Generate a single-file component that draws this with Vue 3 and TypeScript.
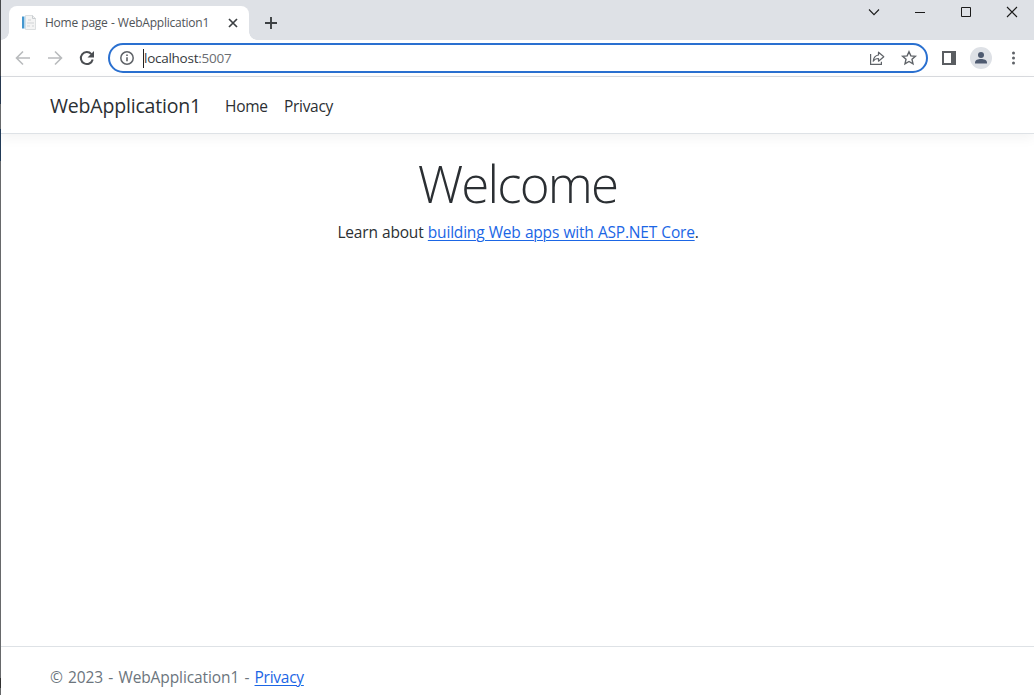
<script setup lang="ts">
const navItems: string[] = ['Home', 'Privacy']
</script>

<template>
  <div class="window">
    <div class="edge"></div>
    <div class="tabs">
      <div class="tab">
        <svg class="fav" width="16" height="16" viewBox="0 0 16 16">
          <path d="M4.500.5h7l3 3v11h-10z" fill="#f4f4f4" stroke="#dcdfe0" />
          <path d="M11.500 .5v3h3" fill="none" stroke="#c9cdd0" />
          <path d="M7 5h3M6 8h7M6 11h3m2 0h2" stroke="#d0d3d5" />
          <path d="M1 1.500h2.500v12H1z" fill="#4497cf" />
          <path d="M3.500 1.500h1.200v12H3.500z" fill="#c5dfed" />
        </svg>
        <span class="title">Home page - WebApplication1</span>
        <svg class="close" width="10" height="10" viewBox="0 0 10 10"><path d="M1 1l8 8M9 1L1 9" stroke="#3c4043" stroke-width="1.700" /></svg>
      </div>
      <svg class="plus" width="14" height="14" viewBox="0 0 14 14"><path d="M7 1v12M1 7h12" stroke="#3c4043" stroke-width="1.900" /></svg>
      <svg class="controls" width="174" height="24" viewBox="0 0 174 24" fill="none" stroke="#1b1b1b">
        <path d="M9 9.500l5 5.200 5-5.200" stroke-width="1.100" />
        <path d="M55 12.500h10" />
        <path d="M101.500 7.500h9v9h-9z" />
        <path d="M147 7l10 10M157 7l-10 10" stroke-width="1.100" />
      </svg>
    </div>

    <div class="toolbar">
      <svg class="nav-icons" width="108" height="36" viewBox="0 0 108 36" fill="none" stroke-width="1.600">
        <path d="M30 18H17M23 11.500L16.500 18l6.500 6.500" stroke="#b9bbbd" />
        <path d="M48 18h13M55 11.500l6.500 6.500-6.500 6.500" stroke="#b9bbbd" />
        <path d="M91.400 14.100A6 6 0 1 0 92.700 19.500" stroke="#4a4d51" stroke-width="2" />
        <path d="M94 11v6.500h-6.500z" fill="#4a4d51" />
      </svg>
      <div class="omnibox">
        <svg class="info" width="16" height="16" viewBox="0 0 16 16" fill="none" stroke="#5f6368">
          <circle cx="8" cy="8" r="6.200" stroke-width="1.500" />
          <path d="M8 7.200v4M8 4.500v1.500" stroke-width="1.600" />
        </svg>
        <span class="caret"></span>
        <span class="url">localhost<i>:5007</i></span>
        <svg class="share" width="18" height="18" viewBox="0 0 18 18" fill="none" stroke="#5f6368" stroke-width="1.200">
          <path d="M2.600 5v10.400h10.800v-2.600" />
          <path d="M10.500 3.200l5.300 4.500-5.300 4.500V9.500c-2.300 0-4 .7-5.300 2.700.4-3.500 2.200-5.700 5.300-6.200z" stroke-linejoin="round" />
        </svg>
        <svg class="star" width="18" height="18" viewBox="0 0 18 18" fill="none" stroke="#5f6368" stroke-width="1.400">
          <path d="M9 2.700l1.850 4.150 4.550.45-3.400 3.050 1 4.450-4-2.350-4 2.350 1-4.450-3.400-3.050 4.550-.45z" />
        </svg>
      </div>
      <svg class="tools" width="106" height="36" viewBox="0 0 106 36">
        <path d="M14 11h14v14H14zm2 2v10h7V13z" fill="#5a5d61" fill-rule="evenodd" />
        <circle cx="53" cy="18" r="11" fill="#dee1e6" />
        <circle cx="53" cy="15" r="3" fill="#4e5a70" />
        <path d="M47 23.500v-1c0-2.400 3-3.500 6-3.500s6 1.100 6 3.500v1z" fill="#4e5a70" />
        <circle cx="85.500" cy="13" r="1.500" fill="#5f6368" />
        <circle cx="85.500" cy="18" r="1.500" fill="#5f6368" />
        <circle cx="85.500" cy="23" r="1.500" fill="#5f6368" />
      </svg>
    </div>

    <header class="navbar">
      <span class="brand">WebApplication1</span>
      <nav><a v-for="item in navItems" :key="item" :class="item.toLowerCase()">{{ item }}</a></nav>
    </header>
    <main>
      <h1>Welcome</h1>
      <p><span class="learn">Learn about </span><a>building Web apps with ASP.NET Core</a>.</p>
    </main>
    <footer><span>© 2023 - WebApplication1 - </span><a>Privacy</a></footer>
  </div>
</template>

<style>
body { margin: 0; overflow: hidden; }
</style>

<style scoped>
* { box-sizing: border-box; }
.window { position: relative; width: 1034px; height: 695px; display: flex; flex-direction: column; background: #fff; color: #2b2f33; font-family: "Open Sans", "Noto Sans", sans-serif; font-size: 15.5px; font-weight: 400; overflow: hidden; }
.edge { position: absolute; z-index: 2; left: 0; top: 0; width: 1px; height: 695px; background: linear-gradient(#47494c 0 76px, #26384f 76px 104px, #67696b 104px 129px, #213a57 129px 161px, #67696b 161px 678px, #303030 678px 688px, #67696b 688px); }
svg { display: block; flex: none; }
.tabs { height: 40px; flex: none; background: #dee1e6; display: flex; padding: 6px 0 0 9px; }
.tab { position: relative; width: 240px; height: 34px; border-radius: 8px 8px 0 0; background: #fff; display: flex; align-items: center; padding-left: 12px; }
.tab::before, .tab::after { content: ""; position: absolute; bottom: 0; width: 8px; height: 8px; }
.tab::before { left: -8px; background: radial-gradient(circle at 0 0, transparent 7.5px, #fff 8px); }
.tab::after { right: -8px; background: radial-gradient(circle at 100% 0, transparent 7.5px, #fff 8px); }
.title { margin-left: 8px; width: 183px; font-size: 12px; line-height: 16px; color: #505458; white-space: nowrap; letter-spacing: -.23px; word-spacing: .4px; }
.plus { margin: 10px 0 0 15px; }
.controls { margin: -6px 0 0 auto; }
.toolbar { height: 37px; flex: none; display: flex; border-bottom: 1px solid #dadce0; }
.omnibox { width: 820px; height: 30px; margin-top: 3px; border: 2px solid #2a70d0; border-radius: 15px; display: flex; align-items: center; padding-left: 9px; }
.caret { width: 1px; height: 19px; margin-left: 8px; background: #222; }
.url { font-size: 13.5px; line-height: 20px; color: #36393d; letter-spacing: -.26px; }
.url i { font-style: normal; color: #6b6e72; }
.share { margin-left: auto; }
.star { margin: 0 8px 0 14px; }
.navbar { height: 57px; flex: none; display: flex; align-items: center; padding-left: 50px; border-bottom: 1px solid #dee2e6; box-shadow: 0 4px 12px rgba(0,0,0,.05); }
.brand { width: 175px; padding-top: 2px; font-size: 19.5px; line-height: 30px; letter-spacing: -.19px; }
nav { display: flex; gap: 16px; line-height: 24px; padding-top: 1px; letter-spacing: -.3px; }
.home { width: 43px; }
main { flex: 1; padding-top: 19px; text-align: center; white-space: nowrap; }
h1 { margin: 0 0 0 1px; font-size: 51px; font-weight: 300; line-height: 61px; letter-spacing: -1.8px; }
p { margin: 6px 0 0 2px; line-height: 24px; letter-spacing: -.2px; word-spacing: .5px; }
main a, footer a { color: #1b66e5; text-decoration: underline; text-decoration-thickness: 1px; text-underline-offset: 2px; }
footer { height: 49px; flex: none; border-top: 1px solid #dee2e6; padding: 18px 0 0 50px; line-height: 24px; color: #6c757d; white-space: nowrap; letter-spacing: -.1px; word-spacing: 1.3px; }
footer a { letter-spacing: -.26px; }
</style>
